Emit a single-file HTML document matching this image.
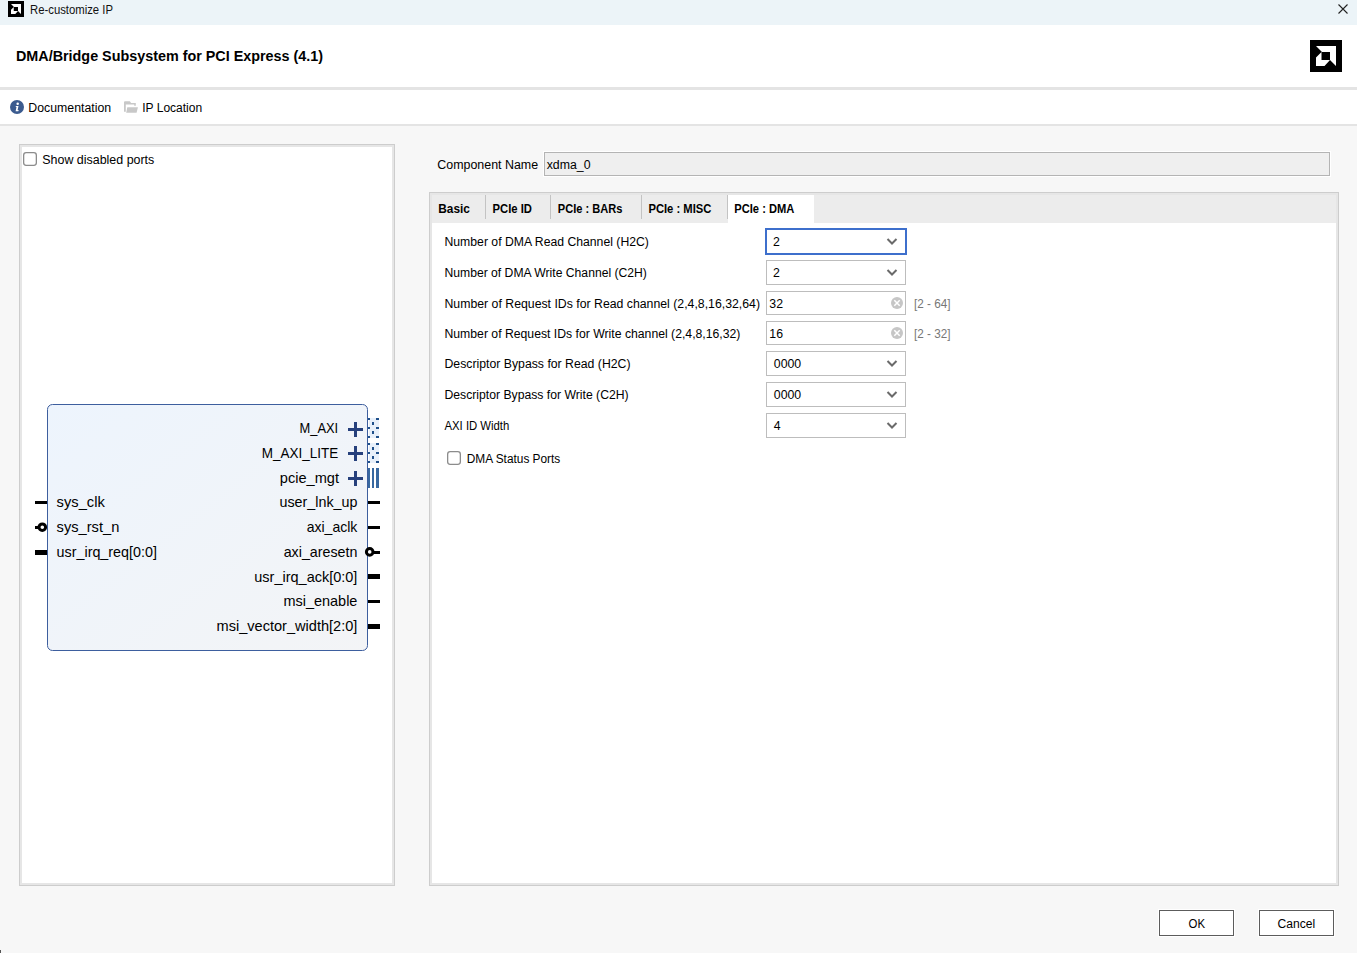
<!DOCTYPE html>
<html><head><meta charset="utf-8"><title>Re-customize IP</title>
<style>html,body{margin:0;padding:0;background:#f7f7f7;overflow:hidden;width:1357px;height:953px} svg{display:block} text{white-space:pre}</style>
</head><body>
<svg width="1357" height="953" viewBox="0 0 1357 953" font-family="'Liberation Sans', sans-serif"><rect x="0" y="0" width="1357" height="953" fill="#f7f7f7" />
<rect x="0" y="0" width="1357" height="25" fill="#ecf4f8" />
<g transform="translate(8,1) scale(0.5)"><rect x="0" y="0" width="32" height="32" fill="#000"/><path d="M6 6 H26 V26 L20 20 V12 H12 Z" fill="#fff"/><path d="M6 17.5 L11.5 12 V20 H20 L14.5 26 H6 Z" fill="#fff"/></g>
<text x="30" y="14" font-size="12.5" fill="#111" textLength="83" lengthAdjust="spacingAndGlyphs" >Re-customize IP</text>
<path d="M1338.5 4.5 L1347.5 13.5 M1347.5 4.5 L1338.5 13.5" stroke="#222" stroke-width="1.1"/>
<rect x="0" y="25" width="1357" height="62" fill="#fff" />
<text x="16" y="61" font-size="14" fill="#000" font-weight="700" textLength="307" lengthAdjust="spacingAndGlyphs" >DMA/Bridge Subsystem for PCI Express (4.1)</text>
<g transform="translate(1310,40) scale(1.0)"><rect x="0" y="0" width="32" height="32" fill="#000"/><path d="M6 6 H26 V26 L20 20 V12 H12 Z" fill="#fff"/><path d="M6 17.5 L11.5 12 V20 H20 L14.5 26 H6 Z" fill="#fff"/></g>
<rect x="0" y="87" width="1357" height="3" fill="#e4e4e4" />
<rect x="0" y="90" width="1357" height="34" fill="#fff" />
<rect x="0" y="124" width="1357" height="2" fill="#e4e4e4" />
<circle cx="17" cy="107" r="7" fill="#3b5b8f"/>
<circle cx="17.7" cy="103.7" r="1.25" fill="#fff"/>
<path d="M15.9 105.9 H18.5 L17.6 110 H18.7 L18.3 111.2 H15.6 L16.5 107.1 H15.7 Z" fill="#fff"/>
<text x="28.3" y="112" font-size="12.3" fill="#000" textLength="82.8" lengthAdjust="spacingAndGlyphs" >Documentation</text>
<path d="M124 111.7 V102.3 Q124 101.3 125 101.3 H129.9 L131.1 102.9 H135.8 V105.7 H134.2 V104.6 H125.8 V111.7 Z" fill="#c8c8c8"/>
<path d="M127.3 107.3 H137.9 L136.6 112.7 H126.2 Z" fill="#c8c8c8"/>
<text x="142.2" y="112" font-size="12.3" fill="#000" textLength="60" lengthAdjust="spacingAndGlyphs" >IP Location</text>
<rect x="19" y="144" width="376" height="742" fill="#cdcdcd" />
<rect x="20" y="145" width="374" height="740" fill="#e6e6e6" />
<rect x="22" y="147" width="370" height="736" fill="#fff" />
<rect x="23.65" y="152.65" width="12.7" height="12.7" rx="2.5" fill="#fff" stroke="#8c8c8c" stroke-width="1.3"/>
<text x="42.3" y="164" font-size="12.3" fill="#000" textLength="112" lengthAdjust="spacingAndGlyphs" >Show disabled ports</text>
<defs><linearGradient id="bg" x1="0" y1="0" x2="1" y2="1"><stop offset="0" stop-color="#edf4fd"/><stop offset="1" stop-color="#f3f4f6"/></linearGradient></defs>
<rect x="47.5" y="404.5" width="320" height="246" rx="5" fill="url(#bg)" stroke="#3d5e9e" stroke-width="1"/>
<rect x="35" y="501" width="12" height="3" fill="#000" />
<text x="56.6" y="507" font-size="15" fill="#000" textLength="48.2" lengthAdjust="spacingAndGlyphs" >sys_clk</text>
<rect x="35" y="526" width="4" height="3" fill="#000" />
<circle cx="42.3" cy="527.2" r="3.3" fill="none" stroke="#000" stroke-width="3"/>
<text x="56.6" y="532" font-size="15" fill="#000" textLength="62.7" lengthAdjust="spacingAndGlyphs" >sys_rst_n</text>
<rect x="35" y="550" width="12" height="5" fill="#000" />
<text x="56.6" y="557" font-size="15" fill="#000" textLength="100.3" lengthAdjust="spacingAndGlyphs" >usr_irq_req[0:0]</text>
<text x="299.5" y="433" font-size="15" fill="#000" textLength="38.7" lengthAdjust="spacingAndGlyphs" >M_AXI</text>
<text x="261.8" y="458" font-size="15" fill="#000" textLength="76.4" lengthAdjust="spacingAndGlyphs" >M_AXI_LITE</text>
<text x="279.8" y="483" font-size="15" fill="#000" textLength="59.2" lengthAdjust="spacingAndGlyphs" >pcie_mgt</text>
<text x="279.5" y="507" font-size="15" fill="#000" textLength="77.9" lengthAdjust="spacingAndGlyphs" >user_lnk_up</text>
<text x="306.7" y="532" font-size="15" fill="#000" textLength="50.7" lengthAdjust="spacingAndGlyphs" >axi_aclk</text>
<text x="283.7" y="557" font-size="15" fill="#000" textLength="73.7" lengthAdjust="spacingAndGlyphs" >axi_aresetn</text>
<text x="254.3" y="582" font-size="15" fill="#000" textLength="103.1" lengthAdjust="spacingAndGlyphs" >usr_irq_ack[0:0]</text>
<text x="283.4" y="606" font-size="15" fill="#000" textLength="74.0" lengthAdjust="spacingAndGlyphs" >msi_enable</text>
<text x="216.5" y="631" font-size="15" fill="#000" textLength="140.9" lengthAdjust="spacingAndGlyphs" >msi_vector_width[2:0]</text>
<rect x="348" y="428" width="15" height="3" fill="#26407c"/>
<rect x="354" y="422" width="3" height="15" fill="#26407c"/>
<rect x="348" y="452" width="15" height="3" fill="#26407c"/>
<rect x="354" y="446" width="3" height="15" fill="#26407c"/>
<rect x="348" y="477" width="15" height="3" fill="#26407c"/>
<rect x="354" y="471" width="3" height="15" fill="#26407c"/>
<rect x="369" y="418" width="10" height="20" fill="#e8f0fa" />
<rect x="368" y="418" width="2" height="2" fill="#1f4f8a" />
<rect x="376" y="418" width="3" height="2" fill="#1f4f8a" />
<rect x="368" y="427" width="2" height="2" fill="#1f4f8a" />
<rect x="376" y="427" width="3" height="2" fill="#1f4f8a" />
<rect x="368" y="436" width="2" height="2" fill="#1f4f8a" />
<rect x="376" y="436" width="3" height="2" fill="#1f4f8a" />
<rect x="372" y="422" width="2" height="3" fill="#1f4f8a" />
<rect x="372" y="431" width="2" height="3" fill="#1f4f8a" />
<rect x="369" y="443" width="10" height="20" fill="#e8f0fa" />
<rect x="368" y="443" width="2" height="2" fill="#1f4f8a" />
<rect x="376" y="443" width="3" height="2" fill="#1f4f8a" />
<rect x="368" y="452" width="2" height="2" fill="#1f4f8a" />
<rect x="376" y="452" width="3" height="2" fill="#1f4f8a" />
<rect x="368" y="461" width="2" height="2" fill="#1f4f8a" />
<rect x="376" y="461" width="3" height="2" fill="#1f4f8a" />
<rect x="372" y="447" width="2" height="3" fill="#1f4f8a" />
<rect x="372" y="456" width="2" height="3" fill="#1f4f8a" />
<rect x="368" y="468" width="2" height="20" fill="#3868a0" />
<rect x="372" y="468" width="2" height="20" fill="#3868a0" />
<rect x="376" y="468" width="3" height="20" fill="#3868a0" />
<rect x="368" y="501" width="12" height="3" fill="#000" />
<rect x="368" y="526" width="12" height="3" fill="#000" />
<circle cx="369.7" cy="551.9" r="3.3" fill="none" stroke="#000" stroke-width="3"/>
<rect x="374" y="551" width="6" height="3" fill="#000" />
<rect x="368" y="574" width="12" height="5" fill="#000" />
<rect x="368" y="600" width="12" height="3" fill="#000" />
<rect x="368" y="624" width="12" height="5" fill="#000" />
<text x="437.3" y="169" font-size="12.3" fill="#000" textLength="100.8" lengthAdjust="spacingAndGlyphs" >Component Name</text>
<rect x="543.5" y="151.5" width="787" height="25" fill="none" stroke="#fff"/>
<rect x="544.5" y="152.5" width="785" height="23" fill="#efefef" stroke="#b4b4b4"/>
<text x="546.7" y="169" font-size="12.3" fill="#000" textLength="43.8" lengthAdjust="spacingAndGlyphs" >xdma_0</text>
<rect x="429" y="192" width="910" height="694" fill="#cdcdcd" />
<rect x="430" y="193" width="908" height="692" fill="#e6e6e6" />
<rect x="432" y="195" width="904" height="688" fill="#fff" />
<rect x="432" y="195" width="904" height="28" fill="#ececec" />
<rect x="728" y="195" width="86" height="28" fill="#fff" />
<rect x="485" y="195" width="1" height="24" fill="#c3c3c3" />
<rect x="550" y="195" width="1" height="24" fill="#c3c3c3" />
<rect x="641" y="195" width="1" height="24" fill="#c3c3c3" />
<rect x="727" y="195" width="1" height="24" fill="#c3c3c3" />
<text x="438.3" y="213" font-size="12" fill="#000" font-weight="700" textLength="31.6" lengthAdjust="spacingAndGlyphs" >Basic</text>
<text x="492.6" y="213" font-size="12" fill="#000" font-weight="700" textLength="39.4" lengthAdjust="spacingAndGlyphs" >PCIe ID</text>
<text x="557.8" y="213" font-size="12" fill="#000" font-weight="700" textLength="64.6" lengthAdjust="spacingAndGlyphs" >PCIe : BARs</text>
<text x="648.4" y="213" font-size="12" fill="#000" font-weight="700" textLength="63" lengthAdjust="spacingAndGlyphs" >PCIe : MISC</text>
<text x="734.3" y="213" font-size="12" fill="#000" font-weight="700" textLength="60" lengthAdjust="spacingAndGlyphs" >PCIe : DMA</text>
<text x="444.5" y="246" font-size="12.3" fill="#000" textLength="204.4" lengthAdjust="spacingAndGlyphs" >Number of DMA Read Channel (H2C)</text>
<text x="444.5" y="277" font-size="12.3" fill="#000" textLength="202.4" lengthAdjust="spacingAndGlyphs" >Number of DMA Write Channel (C2H)</text>
<text x="444.5" y="308" font-size="12.3" fill="#000" textLength="315.5" lengthAdjust="spacingAndGlyphs" >Number of Request IDs for Read channel (2,4,8,16,32,64)</text>
<text x="444.5" y="338" font-size="12.3" fill="#000" textLength="295.9" lengthAdjust="spacingAndGlyphs" >Number of Request IDs for Write channel (2,4,8,16,32)</text>
<text x="444.5" y="368" font-size="12.3" fill="#000" textLength="186.0" lengthAdjust="spacingAndGlyphs" >Descriptor Bypass for Read (H2C)</text>
<text x="444.5" y="399" font-size="12.3" fill="#000" textLength="184.1" lengthAdjust="spacingAndGlyphs" >Descriptor Bypass for Write (C2H)</text>
<text x="444.5" y="430" font-size="12.3" fill="#000" textLength="64.8" lengthAdjust="spacingAndGlyphs" >AXI ID Width</text>
<rect x="766" y="229" width="140" height="25" fill="#fff" stroke="#3d6fcc" stroke-width="2"/>
<text x="773" y="246" font-size="12.3" fill="#000" >2</text>
<path d="M887.5 239.0 L892 243.5 L896.5 239.0" fill="none" stroke="#6a6a6a" stroke-width="2"/>
<rect x="766.5" y="260.5" width="139" height="24" fill="#fff" stroke="#bdbdbd"/>
<text x="773" y="277" font-size="12.3" fill="#000" >2</text>
<path d="M887.5 270.0 L892 274.5 L896.5 270.0" fill="none" stroke="#6a6a6a" stroke-width="2"/>
<rect x="766.5" y="291.5" width="139" height="23" fill="#fff" stroke="#bdbdbd"/>
<text x="769.3" y="308" font-size="12.3" fill="#000" >32</text>
<rect x="766.5" y="321.5" width="139" height="23" fill="#fff" stroke="#bdbdbd"/>
<text x="769.3" y="338" font-size="12.3" fill="#000" >16</text>
<circle cx="897" cy="303" r="6" fill="#c6c6c6"/>
<path d="M894.3 300.3 L899.7 305.7 M899.7 300.3 L894.3 305.7" stroke="#fff" stroke-width="1.5"/>
<circle cx="897" cy="333" r="6" fill="#c6c6c6"/>
<path d="M894.3 330.3 L899.7 335.7 M899.7 330.3 L894.3 335.7" stroke="#fff" stroke-width="1.5"/>
<text x="914" y="308" font-size="12.3" fill="#777" textLength="36.5" lengthAdjust="spacingAndGlyphs" >[2 - 64]</text>
<text x="914" y="338" font-size="12.3" fill="#777" textLength="36.5" lengthAdjust="spacingAndGlyphs" >[2 - 32]</text>
<rect x="766.5" y="351.5" width="139" height="24" fill="#fff" stroke="#bdbdbd"/>
<text x="773.8" y="368" font-size="12.3" fill="#000" >0000</text>
<path d="M887.5 361.0 L892 365.5 L896.5 361.0" fill="none" stroke="#6a6a6a" stroke-width="2"/>
<rect x="766.5" y="382.5" width="139" height="24" fill="#fff" stroke="#bdbdbd"/>
<text x="773.8" y="399" font-size="12.3" fill="#000" >0000</text>
<path d="M887.5 392.0 L892 396.5 L896.5 392.0" fill="none" stroke="#6a6a6a" stroke-width="2"/>
<rect x="766.5" y="413.5" width="139" height="24" fill="#fff" stroke="#bdbdbd"/>
<text x="773.8" y="430" font-size="12.3" fill="#000" >4</text>
<path d="M887.5 423.0 L892 427.5 L896.5 423.0" fill="none" stroke="#6a6a6a" stroke-width="2"/>
<rect x="447.65" y="451.65" width="12.7" height="12.7" rx="2.5" fill="#fff" stroke="#8c8c8c" stroke-width="1.3"/>
<text x="466.7" y="463" font-size="12.3" fill="#000" textLength="93.6" lengthAdjust="spacingAndGlyphs" >DMA Status Ports</text>
<rect x="1158.5" y="909.5" width="76" height="27" fill="none" stroke="#fff"/>
<rect x="1159.5" y="910.5" width="74" height="25" fill="#fff" stroke="#5c5c5c"/>
<text x="1188.5" y="928" font-size="12.3" fill="#000" textLength="16.5" lengthAdjust="spacingAndGlyphs" >OK</text>
<rect x="1258.5" y="909.5" width="76" height="27" fill="none" stroke="#fff"/>
<rect x="1259.5" y="910.5" width="74" height="25" fill="#fff" stroke="#5c5c5c"/>
<rect x="0" y="950" width="1" height="3" fill="#555" />
<text x="1277.6" y="928" font-size="12.3" fill="#000" textLength="37.6" lengthAdjust="spacingAndGlyphs" >Cancel</text></svg>
</body></html>
